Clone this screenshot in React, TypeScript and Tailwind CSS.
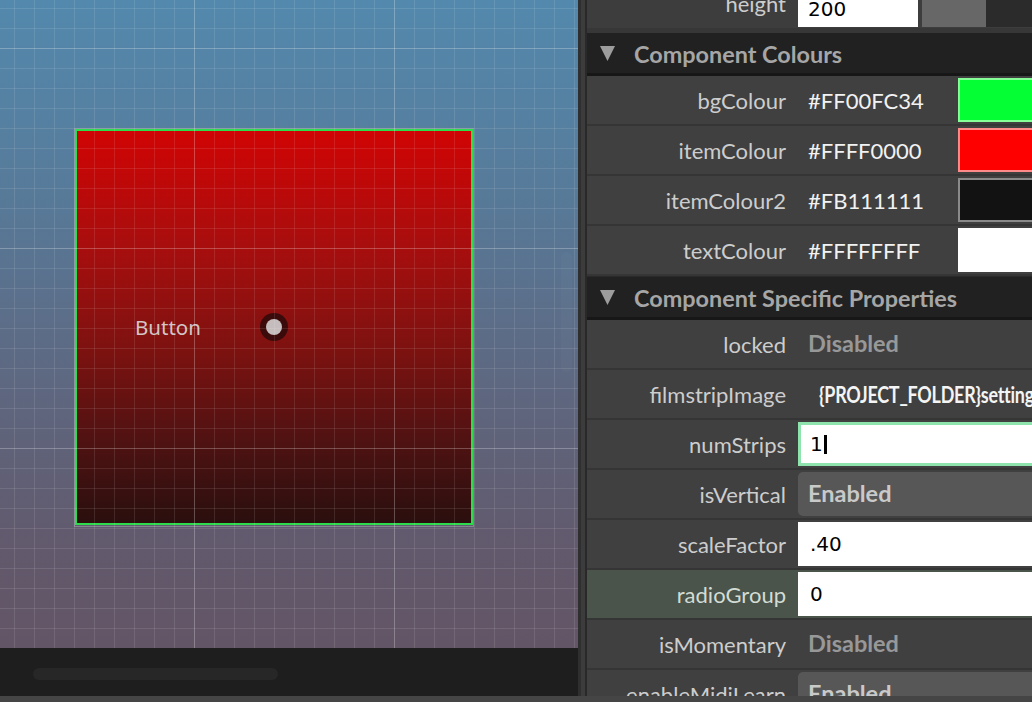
import React from 'react';

interface ColourRow {
  label: string;
  value: string;
  swatch: string;
}

const colourRows: ColourRow[] = [
  { label: 'bgColour', value: '#FF00FC34', swatch: 'bg-[#03ff34] border-[#86ff98]' },
  { label: 'itemColour', value: '#FFFF0000', swatch: 'bg-[#ff0000] border-[#ff8a8a]' },
  { label: 'itemColour2', value: '#FB111111', swatch: 'bg-[#121212] border-[#8a8a8a]' },
  { label: 'textColour', value: '#FFFFFFFF', swatch: 'bg-white border-white' },
];

const CANVAS_W = 578;
const CANVAS_H = 648;

const Grid: React.FC = () => {
  const xs: number[] = [];
  for (let x = 14.5; x < CANVAS_W; x += 20) xs.push(x);
  const ys: number[] = [];
  for (let y = 8.5; y < CANVAS_H; y += 20) ys.push(y);

  return (
    <svg className="absolute inset-0 pointer-events-none" width={CANVAS_W} height={CANVAS_H}>
      {xs.map((x) => (
        <line
          key={'x' + x}
          x1={x}
          x2={x}
          y1={0}
          y2={CANVAS_H}
          stroke="#ffffff"
          strokeOpacity={(x - 194.5) % 200 === 0 ? 0.26 : 0.1}
          strokeWidth={1}
        />
      ))}
      {ys.map((y) => (
        <line
          key={'y' + y}
          x1={0}
          x2={CANVAS_W}
          y1={y}
          y2={y}
          stroke="#ffffff"
          strokeOpacity={(y - 48.5) % 200 === 0 ? 0.26 : 0.1}
          strokeWidth={1}
        />
      ))}
    </svg>
  );
};

const Label: React.FC<{ text: string; light?: boolean }> = ({ text, light }) => (
  <div
    className={`w-[211px] shrink-0 whitespace-nowrap pr-3 text-right text-[22px] ${
      light ? 'text-[#d3dcd4]' : 'text-[#cdcdcd]'
    }`}
  >
    {text}
  </div>
);

const Row: React.FC<{ label: string; highlight?: boolean; children?: React.ReactNode }> = ({
  label,
  highlight,
  children,
}) => (
  <div
    className={`flex h-[50px] shrink-0 items-center border-b-2 border-[#353535] ${
      highlight ? 'bg-[#4a544b]' : 'bg-[#404040]'
    }`}
  >
    <Label text={label} light={highlight} />
    <div className="flex h-full flex-1 items-center overflow-hidden">{children}</div>
  </div>
);

const Header: React.FC<{ title: string }> = ({ title }) => (
  <div className="flex h-[43px] shrink-0 items-center border-b-[3px] border-[#171717] bg-[#212121]">
    <svg width="15" height="15" viewBox="0 0 15 15" className="ml-[13px] mr-[19px] mt-[1px]">
      <polygon points="0,0 15,0 7.5,15" fill="#9d9d9d" />
    </svg>
    <span className="mt-[3px] whitespace-nowrap text-[23.4px] font-bold text-[#a6a6a6]">{title}</span>
  </div>
);

const TextBox: React.FC<{ value: string; caret?: boolean }> = ({ value, caret }) => (
  <div
    className={`flex h-[44px] w-[260px] shrink-0 items-center bg-white font-['DejaVu_Sans',sans-serif] text-[20px] text-black ${
      caret ? 'border-[3px] border-[#8fe3ad] pl-[9px]' : 'pl-3'
    }`}
  >
    {value}
    {caret && <span className="ml-[1px] inline-block h-[19px] w-[3px] bg-black" />}
  </div>
);

const Toggle: React.FC<{ text: string }> = ({ text }) => (
  <div className="flex h-[44px] w-[260px] shrink-0 items-center rounded-[5px] bg-[#575757] pl-[10px] text-[23.5px] font-bold text-[#c9c9c9]">
    {text}
  </div>
);

const Plain: React.FC<{ text: string }> = ({ text }) => (
  <div className="pl-[10px] text-[23.5px] font-bold text-[#989898]">{text}</div>
);

export default function App() {
  return (
    <div className="flex h-[702px] w-[1032px] flex-col overflow-hidden bg-[#444444] font-['Lato',sans-serif]">
      <div className="flex h-[696px] shrink-0">
        {/* editor canvas */}
        <div className="flex w-[578px] shrink-0 flex-col">
          <div className="relative h-[648px] shrink-0 overflow-hidden bg-[linear-gradient(180deg,#5389ad_0%,#577a99_30%,#5d6a84_55%,#62596c_85%,#625566_100%)]">
            <div className="absolute left-[74px] top-[128px] h-[399px] w-[400px] border border-[#9aa3a3]/60">
              <div className="flex h-[396px] items-center border-2 border-[#2edb4c] bg-[linear-gradient(180deg,#d00404_0%,#a70e0e_30%,#7e1210_55%,#4e1212_80%,#2a0f0e_100%)] pl-[58px]">
                <span className="font-['Noto_Sans',sans-serif] text-[20.5px] text-[#d2c6c6]">Button</span>
                <div className="ml-[59px] flex h-[28px] w-[28px] items-center justify-center rounded-full bg-[#3b0b0b]">
                  <div className="h-[16px] w-[16px] rounded-full bg-[#c4bcbd]" />
                </div>
              </div>
            </div>
            <Grid />
            <div className="absolute left-[561px] top-[252px] h-[120px] w-[11px] rounded-full bg-white/[0.025]" />
          </div>
          <div className="flex h-[48px] shrink-0 items-center bg-[#1e1e1e] pl-[33px] pt-[4px]">
            <div className="h-[12px] w-[245px] rounded-full bg-[#272727]" />
          </div>
        </div>

        {/* splitter */}
        <div className="w-[3px] shrink-0 bg-[#2f2f2f]" />
        <div className="w-[4px] shrink-0 bg-[#3c3c3c]" />
        <div className="w-[2px] shrink-0 bg-[#292929]" />

        {/* properties panel */}
        <div className="flex flex-1 flex-col overflow-hidden bg-[#3c3c3c]">
          <div className="mt-[-22px] flex h-[50px] shrink-0 items-center bg-[#3d3d3d]">
            <Label text="height" />
            <div className="mt-[-1px] flex h-[48px] items-end">
              <div className="flex h-[47px] w-[120px] items-end bg-white pb-[3px] pl-[10px] font-['DejaVu_Sans',sans-serif] text-[20px] text-black">
                200
              </div>
              <div className="ml-[4px] h-[47px] w-[64px] bg-[#676767]" />
              <div className="h-[47px] w-[60px] bg-[#2b2b2b]" />
            </div>
          </div>
          <div className="h-[5px] shrink-0 bg-[#373737]" />
          <Header title="Component Colours" />
          {colourRows.map((r) => (
            <Row key={r.label} label={r.label}>
              <div className="w-[160px] shrink-0 pl-[10px] text-[22px] text-[#f2f2f2]">{r.value}</div>
              <div className={`h-[44px] w-[90px] shrink-0 border-2 ${r.swatch}`} />
            </Row>
          ))}
          <div className="h-[1px] shrink-0 bg-[#2a2a2a]" />
          <Header title="Component Specific Properties" />
          <Row label="locked">
            <Plain text="Disabled" />
          </Row>
          <Row label="filmstripImage">
            <div className="ml-[21px] origin-left scale-x-[0.78] whitespace-nowrap text-[23px] font-bold tracking-[-0.3px] text-[#f4f4f4]">
              {'{PROJECT_FOLDER}settings.png'}
            </div>
          </Row>
          <Row label="numStrips">
            <TextBox value="1" caret />
          </Row>
          <Row label="isVertical">
            <Toggle text="Enabled" />
          </Row>
          <Row label="scaleFactor">
            <TextBox value=".40" />
          </Row>
          <Row label="radioGroup" highlight>
            <TextBox value="0" />
          </Row>
          <Row label="isMomentary">
            <Plain text="Disabled" />
          </Row>
          <Row label="enableMidiLearn">
            <Toggle text="Enabled" />
          </Row>
        </div>
      </div>
      <div className="h-[6px] shrink-0 bg-[#454545]" />
    </div>
  );
}
